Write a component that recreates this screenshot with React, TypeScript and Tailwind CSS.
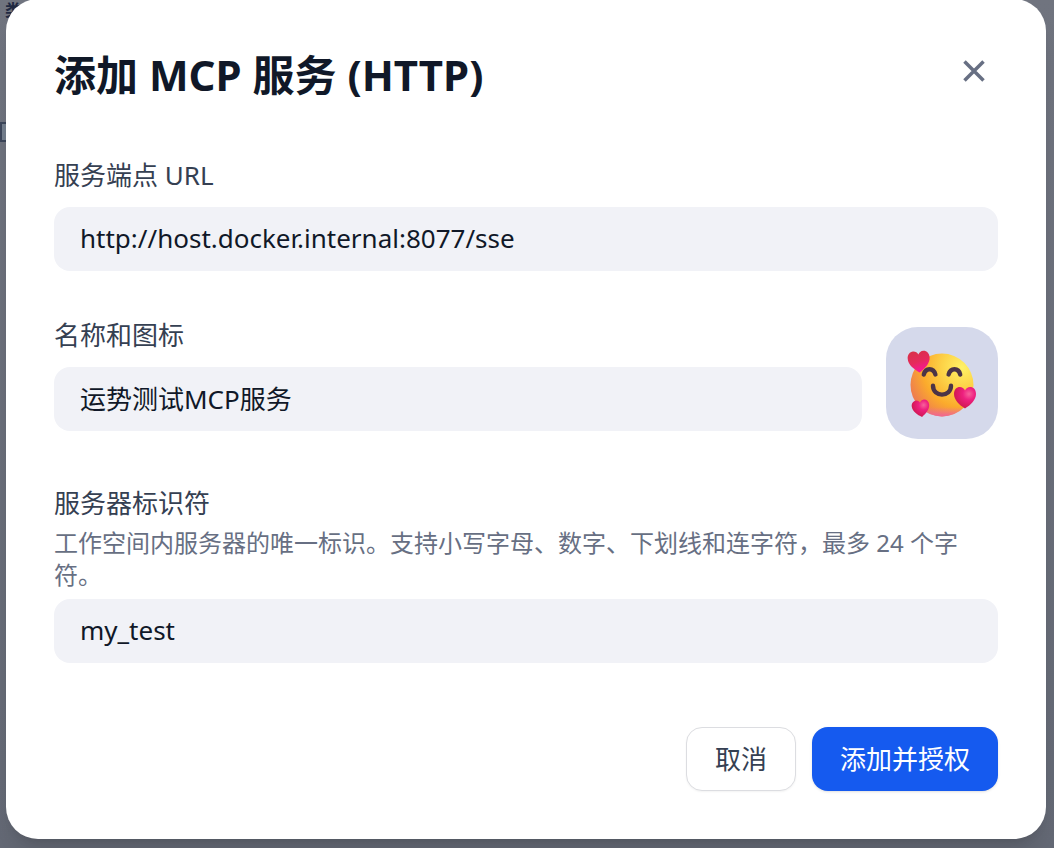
import React from 'react';

interface FieldProps {
  id: string;
  label: string;
  value: string;
  hint?: string;
}

const Field: React.FC<FieldProps> = ({ id, label, value, hint }) => {
  return (
    <div className="min-w-0 flex-1">
      <label htmlFor={id} className="block text-[26px] leading-[48px] text-[#354052]">
        {label}
      </label>
      {hint && (
        <p id={`${id}-hint`} className="text-2xl leading-8 text-[#676f83]">
          {hint}
        </p>
      )}
      <input
        id={id}
        type="text"
        defaultValue={value}
        aria-describedby={hint ? `${id}-hint` : undefined}
        className="mt-2 block h-16 w-full rounded-2xl bg-[#f1f2f7] px-[26px] pb-0.5 text-[26px] text-[#101828] outline-none"
      />
    </div>
  );
};

const HEART = 'M0 6C-3.500 3.900-7 .6-7-3.200-7-5.900-5.300-7.600-3.300-7.600-1.800-7.600-.6-6.700 0-5.400.6-6.700 1.800-7.600 3.300-7.600 5.300-7.600 7-5.900 7-3.200 7 .6 3.500 3.900 0 6Z';

const SmilingHearts: React.FC = () => (
  <svg width="72" height="72" viewBox="0 0 72 72" aria-hidden="true">
    <defs>
      <radialGradient id="face" cx="0.82" cy="0.22" r="0.9">
        <stop offset="0" stopColor="#fff266" />
        <stop offset="0.35" stopColor="#fdd348" />
        <stop offset="0.7" stopColor="#fbab2c" />
        <stop offset="1" stopColor="#ee7d4f" />
      </radialGradient>
      <linearGradient id="blush" x1="0" y1="0" x2="0" y2="1">
        <stop offset="0.85" stopColor="#f26ba8" stopOpacity="0" />
        <stop offset="1" stopColor="#f0609c" stopOpacity="0.9" />
      </linearGradient>
      <radialGradient id="heart" cx="0.68" cy="0.32" r="0.7">
        <stop offset="0" stopColor="#f7639b" />
        <stop offset="0.4" stopColor="#ee2080" />
        <stop offset="1" stopColor="#d01850" />
      </radialGradient>
      <linearGradient id="heart-top" x1="0.3" y1="0" x2="0.6" y2="1">
        <stop offset="0" stopColor="#d93049" />
        <stop offset="0.5" stopColor="#e52a5c" />
        <stop offset="1" stopColor="#fb12a0" />
      </linearGradient>
    </defs>
    <circle cx="36" cy="38" r="31.500" fill="url(#face)" />
    <circle cx="36" cy="38" r="31.500" fill="url(#blush)" />
    <g fill="none" stroke="#4b3447" strokeWidth="4.400" strokeLinecap="round">
      <path d="M17.800 27.500C19.500 20.500 27.500 20.500 29.400 27.500" />
      <path d="M42.600 27.500C44.500 20.500 52.500 20.500 54.200 27.500" />
      <path d="M27 38.800C27 50.500 45 50.500 45 38.800" />
    </g>
    <path d={HEART} fill="url(#heart-top)" transform="translate(13 16) rotate(-4) scale(1.570)" />
    <path d={HEART} fill="url(#heart)" transform="translate(59 52) scale(1.570)" />
    <path d={HEART} fill="url(#heart)" transform="translate(15 62.500) rotate(-8) scale(1.250)" />
  </svg>
);

export default function App() {
  return (
    <div className="fixed inset-0 flex items-end overflow-hidden bg-linear-to-b from-[#70747f] to-[#646975] pr-2 pb-[9px] pl-1.5 font-['Noto_Sans','Noto_Sans_CJK_SC',sans-serif]">
      {/* page content dimmed behind the dialog */}
      <div aria-hidden="true" className="absolute top-0 left-0">
        <div className="pl-[5px] text-base leading-5 font-bold text-[#1f2942]">类</div>
        <div className="mt-[102px] h-5 w-8 border-2 border-[#3c465a] bg-[#747f8e]" />
      </div>

      <div
        role="dialog"
        aria-labelledby="dialog-title"
        className="relative w-full rounded-[32px] bg-white p-12 shadow-xl"
      >
        <div className="flex items-start justify-between">
          <h2 id="dialog-title" className="text-[42px] leading-[56px] font-bold text-[#101828]">
            添加 MCP 服务 (HTTP)
          </h2>
          <button type="button" aria-label="关闭" className="flex size-12 items-center justify-center text-[#676f83]">
            <svg width="24" height="24" viewBox="0 0 24 24" fill="none" stroke="currentColor" strokeWidth="3.500" aria-hidden="true">
              <path d="M2.500 2.500 21.500 21.500M21.500 2.500 2.500 21.500" />
            </svg>
          </button>
        </div>

        <form className="mt-12">
          <div className="flex flex-col gap-10">
            <Field id="server-url" label="服务端点 URL" value="http://host.docker.internal:8077/sse" />
            <div className="flex gap-6">
              <Field id="server-name" label="名称和图标" value="运势测试MCP服务" />
              <button
                type="button"
                aria-label="选择图标"
                className="mt-4 flex size-28 shrink-0 items-center justify-center rounded-[32px] bg-[#d5d9eb]"
              >
                <SmilingHearts />
              </button>
            </div>
            <Field
              id="server-identifier"
              label="服务器标识符"
              value="my_test"
              hint="工作空间内服务器的唯一标识。支持小写字母、数字、下划线和连字符，最多 24 个字符。"
            />
          </div>

          <div className="mt-16 flex justify-end gap-4">
            <button
              type="button"
              className="h-16 rounded-2xl border border-[#dcdde1] bg-white px-7 text-[26px] text-[#354052] shadow-xs"
            >
              取消
            </button>
            <button type="button" className="h-16 rounded-2xl bg-[#155aef] px-7 text-[26px] text-white shadow-sm">
              添加并授权
            </button>
          </div>
        </form>
      </div>
    </div>
  );
}
